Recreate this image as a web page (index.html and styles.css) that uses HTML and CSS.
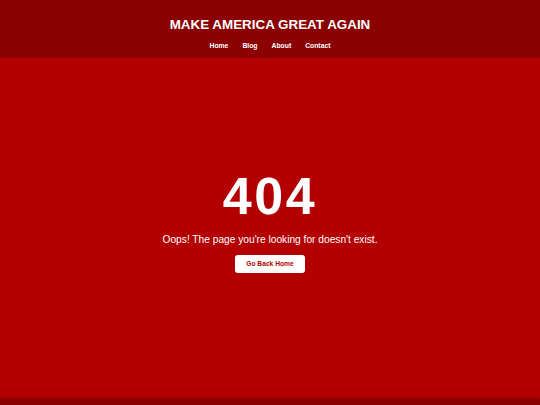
FILE: index.html
```html
<!DOCTYPE html>
<html lang="en">
<head>
<meta charset="utf-8">
<title>404 - Make America Great Again</title>
<link rel="stylesheet" href="styles.css">
</head>
<body>
<header class="site-header">
  <h1 class="site-title">MAKE AMERICA GREAT AGAIN</h1>
  <nav class="site-nav">
    <a href="#">Home</a>
    <a href="#">Blog</a>
    <a href="#">About</a>
    <a href="#">Contact</a>
  </nav>
</header>
<main class="error-main">
  <div class="error-box">
    <div class="error-code">404</div>
    <p class="error-text">Oops! The page you're looking for doesn't exist.</p>
    <a class="home-btn" href="#">Go Back Home</a>
  </div>
</main>
<footer class="site-footer"></footer>
</body>
</html>
```
FILE: styles.css
```css
html, body {
  margin: 0;
  padding: 0;
}
body {
  font-family: "Liberation Sans", Arial, sans-serif;
  background: #b30000;
  color: #fff;
}
.site-header {
  background: #8b0000;
  height: 58px;
  box-sizing: border-box;
  padding-top: 16px;
  text-align: center;
}
.site-title {
  margin: 0;
  font-size: 13.4px;
  line-height: 18px;
  font-weight: bold;
}
.site-nav {
  margin-top: 7px;
  display: flex;
  justify-content: center;
  gap: 14px;
}
.site-nav a {
  color: #fff;
  text-decoration: none;
  font-size: 6.8px;
  font-weight: bold;
  line-height: 10px;
}
.error-main {
  height: 341px;
  display: flex;
  align-items: center;
  justify-content: center;
  text-align: center;
}
.error-box {
  display: flex;
  flex-direction: column;
  align-items: center;
  margin-top: -16px;
}
.error-code {
  font-size: 52px;
  font-weight: bold;
  line-height: 56px;
  letter-spacing: 2.5px;
  margin-bottom: 1px;
}
.error-text {
  margin: 8px 0 8px;
  font-size: 10.2px;
  line-height: 14px;
}
.home-btn {
  display: inline-block;
  background: #fff;
  color: #b30000;
  text-decoration: none;
  font-size: 6.7px;
  font-weight: bold;
  padding: 4px 11px;
  line-height: 10px;
  border-radius: 3px;
}
.site-footer {
  background: #8b0000;
  height: 20px;
  box-shadow: 0 -2px 4px rgba(0,0,0,0.15);
}
```
